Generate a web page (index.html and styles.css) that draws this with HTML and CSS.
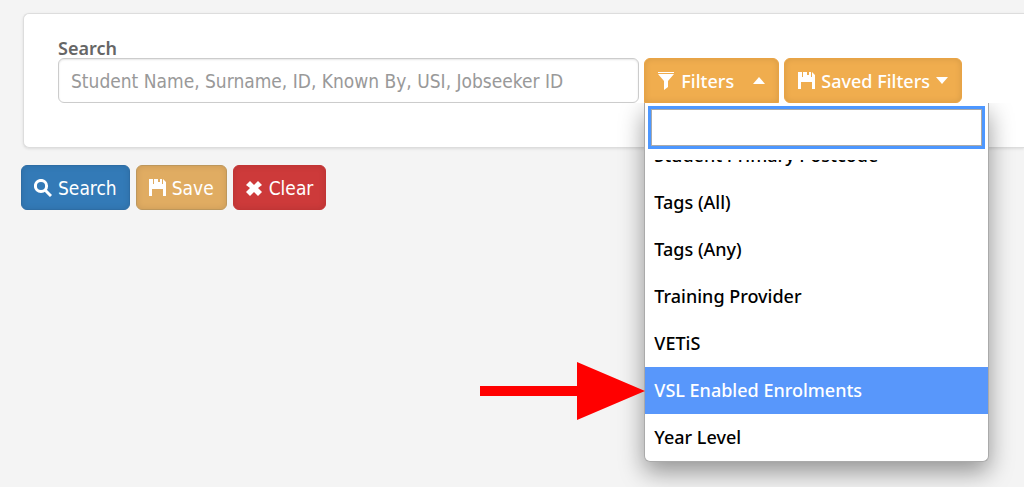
FILE: index.html
```html
<!DOCTYPE html>
<html lang="en">
<head>
    <meta charset="utf-8">
    <title>Student Search</title>
    <link rel="stylesheet" href="styles.css">
</head>
<body>
    <form class="search-form">
        <div class="well">
            <label class="search-label" for="search">Search</label>
            <div class="search-row">
                <input class="form-control" id="search" type="text" placeholder="Student Name, Surname, ID, Known By, USI, Jobseeker ID">
                <div class="filters">
                    <button class="btn btn-filter btn-open" type="button" aria-haspopup="listbox" aria-expanded="true">
                        <svg class="icon" viewBox="0 0 17 18"><path d="M0 0h16v1H0zM0 2h16l-6 7v6l-4 3V9z"/></svg>
                        Filters
                        <span class="caret caret-up"></span>
                    </button>
                    <!-- Filter menu -->
                    <div class="dropdown">
                        <input class="dropdown-search" type="text" aria-label="Search filters">
                        <ul class="dropdown-list" role="listbox" aria-label="Filters">
                            <li class="option" role="option">Student Primary Postcode</li>
                            <li class="option" role="option">Tags (All)</li>
                            <li class="option" role="option">Tags (Any)</li>
                            <li class="option" role="option">Training Provider</li>
                            <li class="option" role="option">VETiS</li>
                            <li class="option option-active" role="option" aria-selected="true">VSL Enabled Enrolments</li>
                            <li class="option" role="option">Year Level</li>
                        </ul>
                        <svg class="arrow" viewBox="0 0 165 58"><path d="M0 24h97V0l68 29-68 29V34H0z"/></svg>
                    </div>
                </div>
                <button class="btn btn-filter" type="button">
                    <svg class="icon" viewBox="0 0 17 18"><path d="M0 0h4v5h1V0h4v3h2V0h2v5h1V0l3 3v14h-3v-7H3v7H0z"/></svg>
                    Saved Filters
                    <span class="caret"></span>
                </button>
            </div>
        </div>

        <!-- Form buttons -->
        <div class="actions">
            <button class="btn btn-search" type="submit">
                <svg class="icon icon-search" viewBox="0 0 18 18"><circle cx="7" cy="7" r="5.6"/><path d="M11 11l6 6"/></svg>
                Search
            </button>
            <button class="btn btn-save" type="button">
                <svg class="icon" viewBox="0 0 17 18"><path d="M0 0h4v5h1V0h4v3h2V0h2v5h1V0l3 3v14h-3v-7H3v7H0z"/></svg>
                Save
            </button>
            <button class="btn btn-clear" type="reset">
                <svg class="icon" viewBox="0 0 17 18"><path d="M4 2l4 4 4-4 4 4-4 3 4 4-4 4-4-4-4 4-4-4 4-4-4-3z"/></svg>
                Clear
            </button>
        </div>
    </form>
</body>
</html>
```

FILE: styles.css
```css
* {
    box-sizing: border-box;
}
body {
    min-height: 100vh;
    margin: 0;
    background-color: #f4f4f4;
    font-family: Tahoma, "DejaVu Sans Condensed", "Noto Sans", sans-serif;
    font-size: 19px;
    color: #666;
}
.search-form {
    padding: 13px 0 0 21px;
}
.well {
    margin-left: 2px;
    padding: 24px 62px 44px 34px;
    background-color: #fff;
    border: 1px solid #ddd;
    border-right: 0;
    border-radius: 6px 0 0 6px;
    box-shadow: 0 1px 3px rgba(0, 0, 0, 0.1);
}
.search-label {
    display: block;
    line-height: 20px;
    font-family: "Trebuchet MS", "Noto Sans", sans-serif;
    font-size: 18px;
    font-weight: 600;
}
.search-row {
    display: flex;
    gap: 5px;
}
.form-control {
    flex: 1;
    min-width: 0;
    height: 45px;
    padding: 0 12px;
    border: 1px solid #ccc;
    border-radius: 6px;
    background-color: #fff;
    box-shadow: inset 0 1px 2px rgba(0, 0, 0, 0.1);
    font: inherit;
}
.form-control::placeholder {
    color: #999;
    opacity: 1;
}
.btn {
    display: flex;
    align-items: center;
    gap: 6px;
    height: 45px;
    padding: 0 12px;
    border: 1px solid transparent;
    border-radius: 6px;
    box-shadow: inset 0 0 6px rgba(0, 0, 0, 0.1);
    color: #fff;
    font: inherit;
    white-space: nowrap;
    cursor: pointer;
}
.icon {
    flex: none;
    width: 17px;
    height: 18px;
    fill: #fff;
}
.icon-search {
    width: 18px;
    fill: none;
    stroke: #fff;
    stroke-width: 3;
}
.btn-filter {
    padding: 0 13px;
    background-color: #f0ad4e;
    border-color: #e9a344;
    font-family: "Trebuchet MS", "Noto Sans", sans-serif;
    font-size: 18px;
    font-weight: 500;
}
.btn-open {
    width: 135px;
    border-radius: 6px 6px 0 0;
}
.caret {
    border: 6px solid transparent;
    border-top: 7px solid #fff;
    border-bottom: 0;
}
.caret-up {
    margin-left: auto;
    border-top: 0;
    border-bottom: 7px solid #fff;
}
.filters {
    position: relative;
}
.dropdown {
    position: absolute;
    z-index: 10;
    top: 100%;
    left: 0;
    width: 345px;
    padding-top: 3px;
    background-color: #fff;
    border: 1px solid #aaa;
    border-top: 0;
    border-radius: 0 0 6px 6px;
    box-shadow: 0 10px 24px rgba(0, 0, 0, 0.4);
    clip-path: inset(0 -200px -60px -200px);
    font-family: "Trebuchet MS", "Noto Sans", sans-serif;
    font-size: 18px;
    font-weight: 500;
    color: #000;
}
.dropdown-search {
    display: block;
    width: calc(100% - 6px);
    height: 43px;
    margin: 0 3px 11px;
    padding: 0 8px;
    border: 3px solid #4d97ff;
    box-shadow: inset 0 0 0 1px #aaa;
    outline: 0;
    font: inherit;
}
.dropdown-list {
    display: flex;
    flex-direction: column;
    justify-content: flex-end;
    height: 301px;
    margin: 0;
    padding: 0;
    overflow: hidden;
    border-radius: 0 0 5px 5px;
    list-style: none;
}
.option {
    flex: none;
    padding: 0 9px;
    line-height: 47px;
}
.option-active {
    background-color: #5897fb;
    color: #fff;
}
.arrow {
    position: absolute;
    right: 100%;
    bottom: 41px;
    width: 165px;
    height: 58px;
    fill: #f00;
}
.actions {
    display: flex;
    gap: 6px;
    margin-top: 17px;
}
.btn-search {
    background-color: #337ab7;
    border-color: #2e6da4;
}
.btn-save {
    background-color: #e0ac62;
    border-color: #bd975c;
}
.btn-clear {
    background-color: #cd3a3a;
    border-color: #c23535;
}
```
